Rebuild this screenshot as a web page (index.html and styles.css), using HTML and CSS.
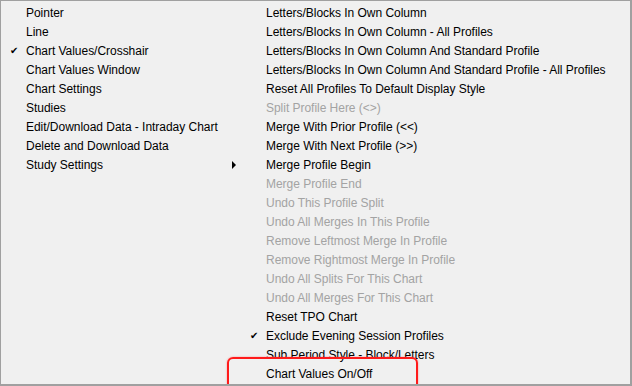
FILE: index.html
```html
<!DOCTYPE html>
<html lang="en">
<head>
    <meta charset="UTF-8">
    <title>Chart menu</title>
    <link rel="stylesheet" href="styles.css">
</head>
<body>
    <div class="frame">
        <ul class="menu menu-main">
            <li class="item"><span class="check"></span><span class="label">Pointer</span></li>
            <li class="item"><span class="check"></span><span class="label">Line</span></li>
            <li class="item"><span class="check">&#10004;</span><span class="label">Chart Values/Crosshair</span></li>
            <li class="item"><span class="check"></span><span class="label">Chart Values Window</span></li>
            <li class="item"><span class="check"></span><span class="label">Chart Settings</span></li>
            <li class="item"><span class="check"></span><span class="label">Studies</span></li>
            <li class="item"><span class="check"></span><span class="label">Edit/Download Data - Intraday Chart</span></li>
            <li class="item"><span class="check"></span><span class="label">Delete and Download Data</span></li>
            <li class="item"><span class="check"></span><span class="label">Study Settings</span><span class="arrow"></span></li>
        </ul>

        <ul class="menu menu-sub">
            <li class="item"><span class="check"></span><span class="label">Letters/Blocks In Own Column</span></li>
            <li class="item"><span class="check"></span><span class="label">Letters/Blocks In Own Column - All Profiles</span></li>
            <li class="item"><span class="check"></span><span class="label">Letters/Blocks In Own Column And Standard Profile</span></li>
            <li class="item"><span class="check"></span><span class="label">Letters/Blocks In Own Column And Standard Profile - All Profiles</span></li>
            <li class="item"><span class="check"></span><span class="label">Reset All Profiles To Default Display Style</span></li>
            <li class="item disabled"><span class="check"></span><span class="label">Split Profile Here (&lt;&gt;)</span></li>
            <li class="item"><span class="check"></span><span class="label">Merge With Prior Profile (&lt;&lt;)</span></li>
            <li class="item"><span class="check"></span><span class="label">Merge With Next Profile (&gt;&gt;)</span></li>
            <li class="item"><span class="check"></span><span class="label">Merge Profile Begin</span></li>
            <li class="item disabled"><span class="check"></span><span class="label">Merge Profile End</span></li>
            <li class="item disabled"><span class="check"></span><span class="label">Undo This Profile Split</span></li>
            <li class="item disabled"><span class="check"></span><span class="label">Undo All Merges In This Profile</span></li>
            <li class="item disabled"><span class="check"></span><span class="label">Remove Leftmost Merge In Profile</span></li>
            <li class="item disabled"><span class="check"></span><span class="label">Remove Rightmost Merge In Profile</span></li>
            <li class="item disabled"><span class="check"></span><span class="label">Undo All Splits For This Chart</span></li>
            <li class="item disabled"><span class="check"></span><span class="label">Undo All Merges For This Chart</span></li>
            <li class="item"><span class="check"></span><span class="label">Reset TPO Chart</span></li>
            <li class="item"><span class="check">&#10004;</span><span class="label">Exclude Evening Session Profiles</span></li>
            <li class="item"><span class="check"></span><span class="label">Sub Period Style - Block/Letters</span></li>
            <li class="item"><span class="check"></span><span class="label">Chart Values On/Off</span></li>
        </ul>

        <div class="highlight"></div>
    </div>
</body>
</html>
```

FILE: styles.css
```css
* {
    margin: 0;
    padding: 0;
    box-sizing: border-box;
}

body {
    font-family: 'Liberation Sans', Arial, sans-serif;
    font-size: 12px;
    background: #ffffff;
    color: #000000;
}

.frame {
    position: relative;
    display: flex;
    width: 632px;
    height: 386px;
    padding-top: 2px;
    background: #f0f0f0;
    border: 1px solid #a0a0a0;
    border-right-width: 2px;
    border-bottom-width: 2px;
    overflow: hidden;
}

.menu {
    list-style: none;
}

.menu-main {
    width: 240px;
}

.menu-sub {
    flex: 1;
}

.item {
    display: flex;
    align-items: center;
    height: 19px;
    white-space: nowrap;
}

.check {
    width: 25px;
    padding-left: 9px;
    font-family: 'DejaVu Sans', sans-serif;
    font-size: 10px;
}

.label {
    flex: 1;
    letter-spacing: -0.03px;
}

.item.disabled {
    color: #a3a3a3;
}

.arrow {
    width: 0;
    height: 0;
    margin-right: 5px;
    border-top: 4px solid transparent;
    border-bottom: 4px solid transparent;
    border-left: 4px solid #000000;
}

.highlight {
    position: absolute;
    left: 226px;
    top: 356px;
    width: 191px;
    height: 40px;
    border: 2px solid #ff1a1a;
    border-radius: 6px;
    box-shadow: 0 0 2px rgba(255, 0, 0, 0.4);
}
```
